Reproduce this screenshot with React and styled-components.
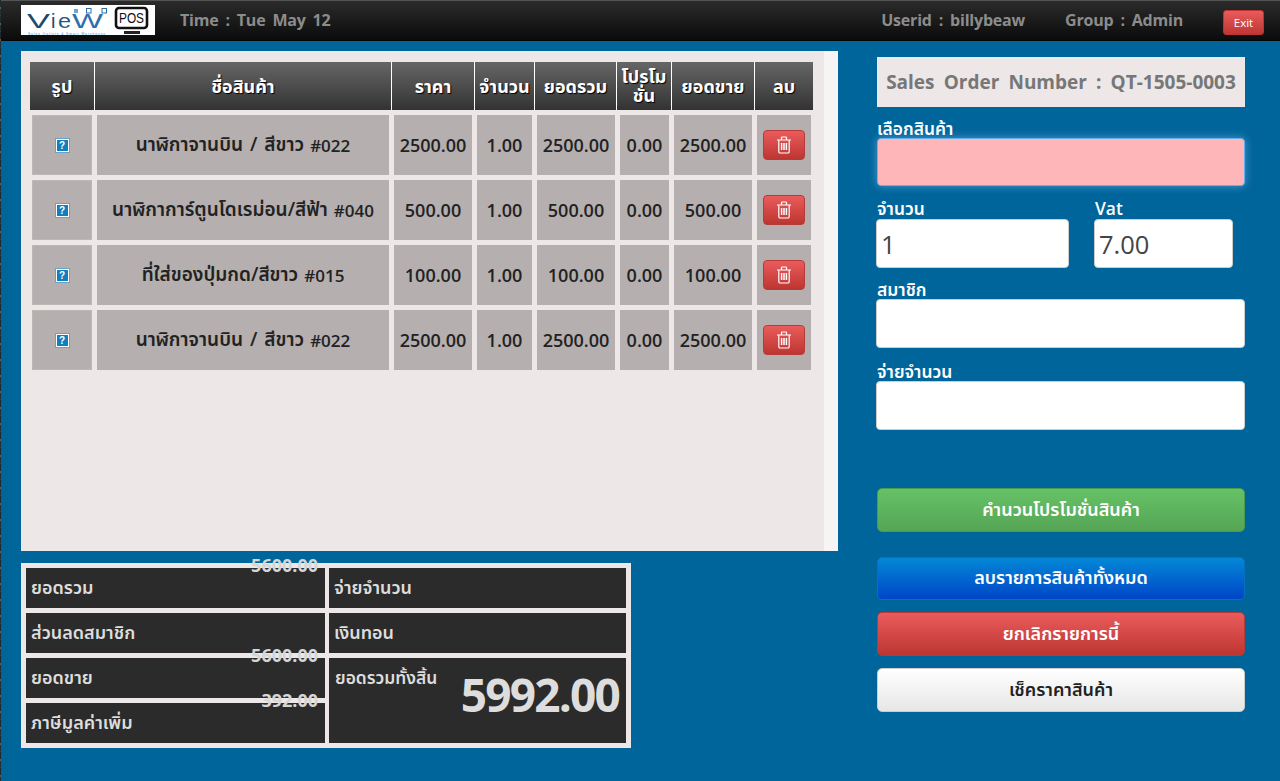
import React from "react";
import styled, { createGlobalStyle } from "styled-components";

const rows = [
  { name: "นาฬิกาจานบิน / สีขาว", code: "#022", price: "2500.00", qty: "1.00", total: "2500.00", promo: "0.00", net: "2500.00" },
  { name: "นาฬิกาการ์ตูนโดเรม่อน/สีฟ้า", code: "#040", price: "500.00", qty: "1.00", total: "500.00", promo: "0.00", net: "500.00" },
  { name: "ที่ใส่ของปุ่มกด/สีขาว", code: "#015", price: "100.00", qty: "1.00", total: "100.00", promo: "0.00", net: "100.00" },
  { name: "นาฬิกาจานบิน / สีขาว", code: "#022", price: "2500.00", qty: "1.00", total: "2500.00", promo: "0.00", net: "2500.00" },
];

const heads = ["รูป", "ชื่อสินค้า", "ราคา", "จำนวน", "ยอดรวม", "โปรโมชั่น", "ยอดขาย", "ลบ"];

const FONT = `"Open Sans", "Noto Sans", "Noto Sans Thai", "DejaVu Sans", sans-serif`;

const GlobalStyle = createGlobalStyle`
  html, body { margin: 0; padding: 0; background: #00659a; }
  body { font-family: ${FONT}; }
  * { box-sizing: border-box; }
`;

const Page = styled.div`
  position: relative;
  width: 1280px;
  height: 781px;
  background: #00659a;
  overflow: hidden;
  &::before {
    content: "";
    position: absolute;
    left: 0;
    top: 0;
    width: 1px;
    height: 100%;
    background: repeating-linear-gradient(#1c2a30 0 7px, #6b5a40 7px 9px, #20323a 9px 15px, #5a2a2a 15px 16px);
  }
`;

const TopBar = styled.header`
  height: 41px;
  padding: 4px 16px 0 21px;
  display: flex;
  align-items: flex-start;
  background: linear-gradient(#2b2b2b, #0b0b0b);
  border-top: 1px solid #555;
  border-bottom: 1px solid #050505;
`;

const BarText = styled.span`
  color: #8c8c8c;
  font-size: 16px;
  font-weight: 700;
  line-height: 30px;
  letter-spacing: -0.2px;
  word-spacing: 3px;
  white-space: nowrap;
  margin-left: ${(p) => p.$gap}px;
`;

const Spacer = styled.div`
  flex: 1;
`;

const ExitButton = styled.button`
  width: 41px;
  height: 25px;
  margin: 5px 0 0 40px;
  padding: 0 0 1px;
  color: #fff;
  font: 11.5px ${FONT};
  border: 1px solid #b33;
  border-radius: 3px;
  background: linear-gradient(#e85c5c, #bf3633);
`;

const Main = styled.main`
  display: flex;
  padding: 10px 0 0 21px;
`;

const LeftColumn = styled.section`
  width: 817px;
`;

const ListPanel = styled.div`
  height: 500px;
  display: flex;
  background: #ede7e7;
`;

const ListBody = styled.div`
  flex: 1;
  padding: 11px 11px 0 9px;
`;

const ScrollTrack = styled.div`
  width: 14px;
  background: #f6f4f4;
`;

const HeadRow = styled.div`
  display: grid;
  grid-template-columns: 64px 296px 82px 59px 81px 54px 82px 58px;
  gap: 1px;
  background: #fff;
  height: 48px;
`;

const HeadCell = styled.div`
  display: flex;
  align-items: center;
  justify-content: center;
  padding: 0 1px;
  text-align: center;
  color: #fff;
  font-size: 18px;
  font-weight: 700;
  line-height: 19px;
  text-shadow: 1px 1px 1px #000;
  background: linear-gradient(#666, #333);
`;

const BodyRow = styled.div`
  display: grid;
  grid-template-columns: 60px 292px 78px 55px 78px 49px 78px 54px;
  gap: 5px;
  height: 60px;
  margin: 5px 0 0 2px;
`;

const Cell = styled.div`
  display: flex;
  align-items: center;
  justify-content: center;
  white-space: nowrap;
  color: #222;
  font-size: 18px;
  font-weight: 600;
  background: #b5afaf;
`;

const PhotoCell = styled(Cell)`
  border: 1px solid #bdb8b6;
`;

const NameCell = styled(Cell)`
  padding-top: 1px;
  font-size: 19px;
  word-spacing: 2px;
`;

const ItemCode = styled.span`
  margin-left: 6px;
  font-size: 17px;
`;

const PhotoStub = styled.span`
  width: 15px;
  height: 15px;
  display: flex;
  align-items: center;
  justify-content: center;
  color: #fff;
  font: 700 10px "Liberation Sans", sans-serif;
  background: #0f7fbd;
  border: 1px solid #6ea0c4;
  box-shadow: inset 0 0 0 1px #fff;
`;

const DeleteButton = styled.button`
  width: 42px;
  height: 30px;
  padding: 0;
  display: flex;
  align-items: center;
  justify-content: center;
  border: 1px solid #b53b38;
  border-radius: 4px;
  background: linear-gradient(#ea5c5c, #bd3531);
`;

const SummaryPanel = styled.div`
  width: 610px;
  height: 185px;
  margin-top: 12px;
  padding: 5px;
  display: grid;
  grid-template-columns: 299px 297px;
  grid-template-rows: repeat(4, 40px);
  gap: 5px 4px;
  background: #ede7e7;
`;

const SummaryCell = styled.div`
  position: relative;
  display: flex;
  align-items: center;
  padding-left: 5px;
  color: #ddd;
  font-size: 18px;
  font-weight: 600;
  background: #2b2b2b;
`;

const OverflowValue = styled.span`
  position: absolute;
  top: -13px;
  right: 7px;
  color: #d6d6d6;
  font-size: 18px;
  font-weight: 700;
  line-height: 20px;
`;

const GrandCell = styled.div`
  grid-column: 2;
  grid-row: 3 / span 2;
  display: flex;
  justify-content: space-between;
  padding: 7px 7px 0 6px;
  color: #ddd;
  font-size: 17.4px;
  font-weight: 600;
  background: #2b2b2b;
`;

const GrandValue = styled.span`
  font-size: 46px;
  font-weight: 700;
  line-height: 58px;
  letter-spacing: -1.8px;
`;

const RightColumn = styled.aside`
  width: 368px;
  margin: 6px 0 0 39px;
`;

const OrderNumber = styled.div`
  height: 50px;
  display: flex;
  align-items: center;
  justify-content: center;
  white-space: nowrap;
  word-spacing: 4.2px;
  color: #777;
  font-size: 19px;
  font-weight: 700;
  background: #ede7e7;
`;

const FieldLabel = styled.label`
  display: block;
  height: ${(p) => p.$h || 20}px;
  line-height: 20px;
  color: #fff;
  font-size: 17.4px;
  font-weight: 600;
  white-space: nowrap;
  margin-top: ${(p) => p.$mt || 0}px;
`;

const TextField = styled.input`
  display: block;
  width: ${(p) => p.$w || 369}px;
  height: 49px;
  margin-left: -1px;
  padding: 0 4px;
  color: #444;
  font: 25.5px ${FONT};
  background: #fff;
  border: 1px solid #ccc;
  border-radius: 4px;
  outline: none;
`;

const PinkField = styled(TextField)`
  height: 48px;
  margin-left: 0;
  width: 368px;
  background: #ffb6b9;
  border-color: #66afe9;
  box-shadow: 0 0 8px rgba(102, 175, 233, 0.7);
`;

const FieldPair = styled.div`
  display: flex;
  gap: 26px;
`;

const ActionButton = styled.button`
  display: block;
  width: 368px;
  height: ${(p) => p.$h || 44}px;
  margin-top: ${(p) => p.$mt}px;
  padding: 0;
  color: ${(p) => p.$fg || "#fff"};
  font: 600 18px ${FONT};
  border: 1px solid ${(p) => p.$edge};
  border-radius: 5px;
  background: linear-gradient(${(p) => p.$top}, ${(p) => p.$bottom});
`;

function TrashIcon() {
  return (
    <svg width="16" height="18" viewBox="0 0 16 18" fill="none" stroke="#fff" strokeWidth="1.2">
      <path d="M1 4h14M5.5 4V1.7c0-.4.3-.7.7-.7h3.6c.4 0 .7.3.7.7V4" />
      <path d="M2.8 4v11.4c0 .9.6 1.6 1.4 1.6h7.6c.8 0 1.4-.7 1.4-1.6V4" />
      <path d="M5.6 7v7M8 7v7M10.4 7v7" strokeWidth="1.5" />
    </svg>
  );
}

function Logo() {
  const logoFont = "Liberation Sans, sans-serif";
  return (
    <svg width="134" height="30" viewBox="0 0 134 30">
      <rect width="134" height="30" fill="#fff" />
      <text x="6" y="23" fontFamily={logoFont} fontSize="20" fill="#1d4a6e" textLength="23" lengthAdjust="spacingAndGlyphs">V</text>
      <text x="30" y="23" fontFamily={logoFont} fontSize="20" fill="#1d4a6e">i</text>
      <text x="37" y="23" fontFamily={logoFont} fontSize="20" fill="#1d5a8e" textLength="13" lengthAdjust="spacingAndGlyphs">e</text>
      <text x="51" y="23" fontFamily={logoFont} fontSize="20" fill="#2f6fa8" textLength="31" lengthAdjust="spacingAndGlyphs">W</text>
      <rect x="53" y="4" width="4" height="4" fill="#6aa5dc" />
      <rect x="65.5" y="3.5" width="4.5" height="4.5" fill="none" stroke="#2f6fa8" />
      <rect x="81" y="3.5" width="4.5" height="4.5" fill="none" stroke="#2f6fa8" />
      <text x="7" y="29.5" fontFamily={logoFont} fontSize="3.2" fill="#2f8fe0" textLength="77">Sales Outlets &amp; Smart Warehouse</text>
      <rect x="95" y="3" width="31" height="20" rx="3" fill="#fff" stroke="#111" strokeWidth="2.6" />
      <text x="98" y="18" fontFamily={logoFont} fontSize="14" fill="#111" textLength="25" lengthAdjust="spacingAndGlyphs">POS</text>
      <rect x="103" y="26" width="16" height="3" fill="#222" />
    </svg>
  );
}

export default function App() {
  return (
    <Page>
      <GlobalStyle />
      <TopBar>
        <Logo />
        <BarText $gap={25}>Time : Tue May 12</BarText>
        <Spacer />
        <BarText>Userid : billybeaw</BarText>
        <BarText $gap={40}>Group : Admin</BarText>
        <ExitButton>Exit</ExitButton>
      </TopBar>
      <Main>
        <LeftColumn>
          <ListPanel>
            <ListBody>
              <HeadRow>
                {heads.map((h) => (
                  <HeadCell key={h}>{h}</HeadCell>
                ))}
              </HeadRow>
              {rows.map((r, i) => (
                <BodyRow key={i}>
                  <PhotoCell><PhotoStub>?</PhotoStub></PhotoCell>
                  <NameCell>{r.name}<ItemCode>{r.code}</ItemCode></NameCell>
                  <Cell>{r.price}</Cell>
                  <Cell>{r.qty}</Cell>
                  <Cell>{r.total}</Cell>
                  <Cell>{r.promo}</Cell>
                  <Cell>{r.net}</Cell>
                  <Cell><DeleteButton><TrashIcon /></DeleteButton></Cell>
                </BodyRow>
              ))}
            </ListBody>
            <ScrollTrack />
          </ListPanel>
          <SummaryPanel>
            <SummaryCell>ยอดรวม<OverflowValue>5600.00</OverflowValue></SummaryCell>
            <SummaryCell>จ่ายจำนวน</SummaryCell>
            <SummaryCell>ส่วนลดสมาชิก</SummaryCell>
            <SummaryCell>เงินทอน</SummaryCell>
            <SummaryCell>ยอดขาย<OverflowValue>5600.00</OverflowValue></SummaryCell>
            <GrandCell>ยอดรวมทั้งสิ้น<GrandValue>5992.00</GrandValue></GrandCell>
            <SummaryCell>ภาษีมูลค่าเพิ่ม<OverflowValue>392.00</OverflowValue></SummaryCell>
          </SummaryPanel>
        </LeftColumn>
        <RightColumn>
          <OrderNumber>Sales Order Number : QT-1505-0003</OrderNumber>
          <FieldLabel $mt={11}>เลือกสินค้า</FieldLabel>
          <PinkField />
          <FieldPair>
            <div>
              <FieldLabel $mt={12} $h={21}>จำนวน</FieldLabel>
              <TextField $w={193} defaultValue="1" />
            </div>
            <div>
              <FieldLabel $mt={12} $h={21}>Vat</FieldLabel>
              <TextField $w={139} defaultValue="7.00" />
            </div>
          </FieldPair>
          <FieldLabel $mt={11}>สมาชิก</FieldLabel>
          <TextField />
          <FieldLabel $mt={13}>จ่ายจำนวน</FieldLabel>
          <TextField />
          <ActionButton $mt={58} $top="#66c266" $bottom="#55a555" $edge="#4c9a4c">คำนวนโปรโมชั่นสินค้า</ActionButton>
          <ActionButton $mt={25} $h={43} $top="#0388d6" $bottom="#0045c8" $edge="#0a6fc0">ลบรายการสินค้าทั้งหมด</ActionButton>
          <ActionButton $mt={12} $top="#ea5c5c" $bottom="#bd3531" $edge="#b53b38">ยกเลิกรายการนี้</ActionButton>
          <ActionButton $mt={12} $fg="#222" $top="#fff" $bottom="#e6e6e6" $edge="#ccc">เช็คราคาสินค้า</ActionButton>
        </RightColumn>
      </Main>
    </Page>
  );
}
